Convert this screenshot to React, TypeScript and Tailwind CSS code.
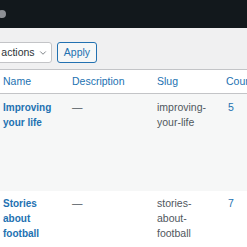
import { ChevronDown } from "lucide-react";

const rows = [
  { name: "Improving your life", slug: "improving-your-life", count: "5", striped: true },
  { name: "Stories about football", slug: "stories-about-football", count: "7", striped: false },
];

export default function App() {
  return (
    <div className="h-[247px] w-[247px] overflow-hidden bg-[#f0f0f1] font-['Liberation_Sans',Arial,sans-serif] text-[10.5px] leading-[15px]">
      <div className="flex h-[28px] items-center bg-[#12181c]">
        <span className="-ml-[2px] h-[8px] w-[8px] rounded-full bg-[#8c8f94]" />
      </div>

      <div className="flex h-[41px] items-start gap-[5px] pt-[14px]">
        <div className="-ml-[31px] flex h-[21px] w-[83px] items-center gap-[3px] rounded-[3px] border border-[#c3c4c7] bg-white pl-[8px] text-[#2c3338]">
          <span className="whitespace-nowrap">Bulk actions</span>
          <ChevronDown size={10} strokeWidth={1.75} className="text-[#50575e]" />
        </div>
        <div className="flex h-[21px] w-[40px] items-center justify-center rounded-[3px] border border-[#2271b1] bg-[#f6f7f7] text-[#2271b1]">
          Apply
        </div>
      </div>

      <div className="border-t border-[#c3c4c7] bg-white">
        <div className="grid h-[24px] grid-cols-[69px_85px_69px_1fr] items-center border-b border-[#c3c4c7] text-[#2271b1]">
          <div className="pl-[3px]">Name</div>
          <div className="pl-[3px]">Description</div>
          <div className="pl-[3px]">Slug</div>
          <div className="whitespace-nowrap pl-[3px]">Count</div>
        </div>

        {rows.map((row) => (
          <div
            key={row.slug}
            className={`grid grid-cols-[69px_85px_69px_1fr] items-start ${row.striped ? "h-[97px] bg-[#f6f7f7] pt-[6px]" : "h-[60px] bg-white pt-[5px]"}`}
          >
            <div className="pl-[3px] pr-[8px] text-[10px] font-bold text-[#2271b1]">{row.name}</div>
            <div className="pl-[3px] text-[#50575e]">—</div>
            <div className="pl-[3px] pr-[8px] text-[#50575e]">
              {row.slug.split("-").map((part, i, all) => (
                <span key={i}>
                  {part}
                  {i < all.length - 1 ? "-" : ""}
                  {i < all.length - 1 ? <wbr /> : null}
                </span>
              ))}
            </div>
            <div className="pl-[5px] text-[#2271b1]">{row.count}</div>
          </div>
        ))}
      </div>
    </div>
  );
}
